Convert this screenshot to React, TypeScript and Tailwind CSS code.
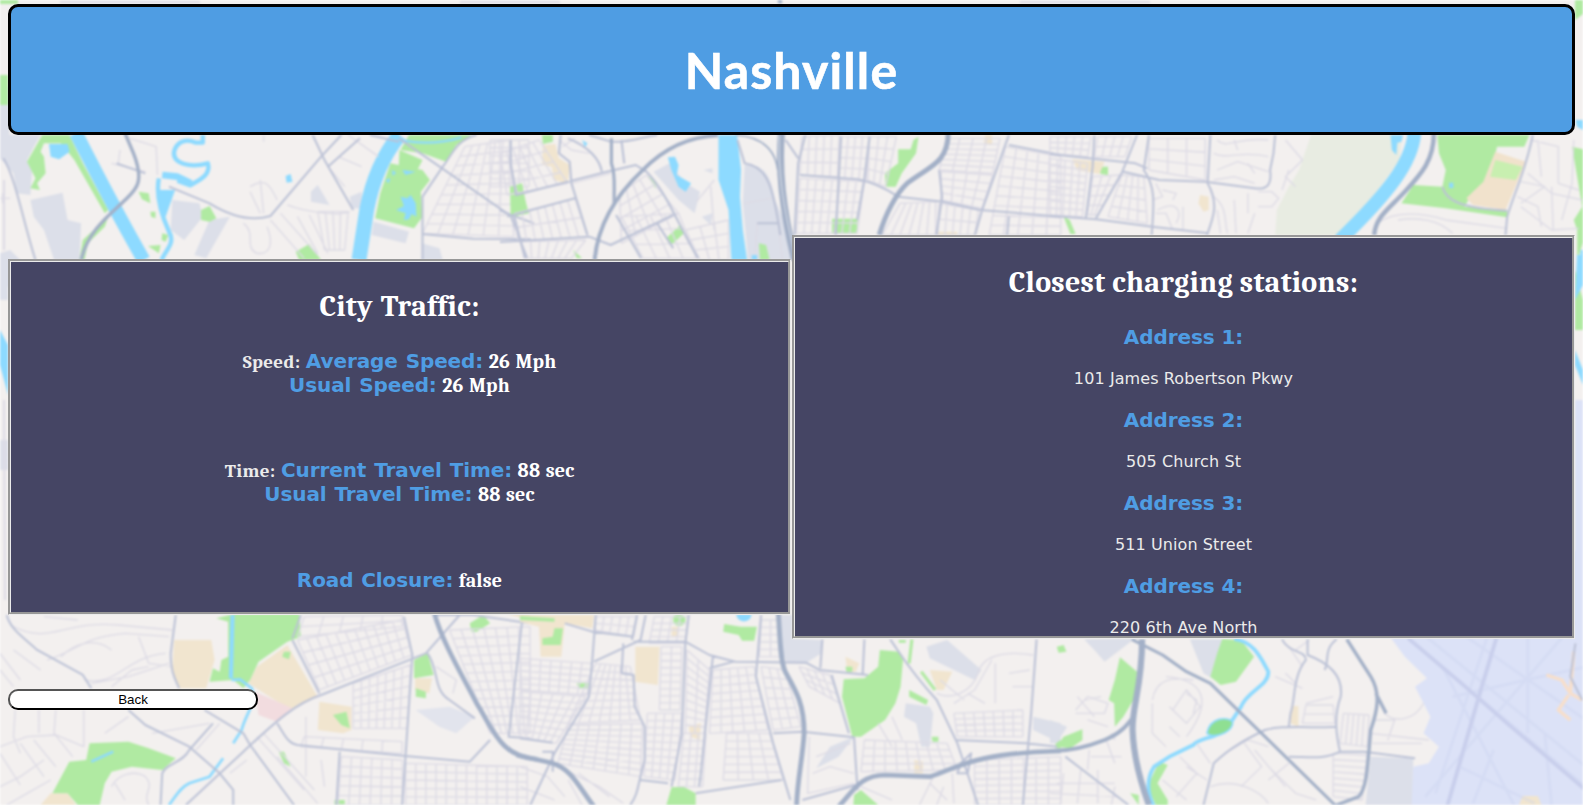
import React from "react";

type Pt = [number, number];

// Evenly spaced streets inside a quadrilateral (corners clockwise from top left).
function grid(a: Pt, b: Pt, c: Pt, d: Pt, cols: number, rows: number): string {
  const mix = (p: Pt, q: Pt, t: number) =>
    `${(p[0] + (q[0] - p[0]) * t).toFixed(1)} ${(p[1] + (q[1] - p[1]) * t).toFixed(1)}`;
  let out = "";
  for (let i = 0; i <= cols; i++) out += `M${mix(a, b, i / cols)}L${mix(d, c, i / cols)}`;
  for (let j = 0; j <= rows; j++) out += `M${mix(a, d, j / rows)}L${mix(b, c, j / rows)}`;
  return out;
}

const GREEN = "#b0eaa2";
const WATER = "#8ddaff";
const GRAY = "#dcdfe9";
const SAND = "#f1e5cf";

function Fill({ c, d }: { c: string; d: string }) {
  return <path d={d} fill={c} stroke="none" />;
}
function Minor({ d }: { d: string }) {
  return <path d={d} stroke="#dddbe5" strokeWidth="4" />;
}
function Street({ d }: { d: string }) {
  return <path d={d} stroke="#bcc2d6" strokeWidth="6" />;
}
function Highway({ d, w = 10 }: { d: string; w?: number }) {
  return <path d={d} stroke="#a3b0c7" strokeWidth={w} />;
}
function River({ d, w }: { d: string; w: number }) {
  return <path d={d} stroke={WATER} strokeWidth={w} />;
}

function NorthWest() {
  return (
    <g transform="translate(0 120) scale(.338 .3333)">
      <Fill c={GRAY} d="M0 -100H28V45H120L100 80L80 120L95 150L90 225L50 220L40 160L0 115Z M90 240L185 218L200 300L240 310L235 420H160L130 330L100 290Z M0 400L30 390L60 420V500H0Z M510 240L590 250L600 290L545 360L505 330Z M620 300L680 290L610 415L575 405Z M920 215L940 195L975 255L920 245Z M1035 230L1070 215V265H1040Z M1105 305L1210 335L1200 370L1100 345Z M1248 370L1300 385L1310 420H1248Z" />
      <Fill c={GREEN} d="M125 45H205L245 130L320 270L310 280L220 120L180 70L130 70L120 95L130 110L135 160L110 190L118 210L90 205L105 175L80 125Z M235 420L245 360L320 290L310 320L260 370L250 420Z M875 395L915 372L950 420H885Z M595 270L620 258L640 295L620 305L595 300Z M410 215L440 220L445 250L420 238Z M445 275L460 275V295L447 290Z M480 340L498 345L490 365L478 360Z M438 378L475 375L470 400Z M1210 45H1395L1350 75L1320 125L1250 100L1185 90Z M1182 90L1250 120L1235 150L1180 135Z M1155 130L1250 150L1272 180L1245 215L1250 290L1225 325L1110 295L1125 220Z M1510 200L1540 195L1565 280L1515 290Z" />
      <Fill c={WATER} d="M145 72H200L206 95L175 118L150 110Z M845 168L860 162L865 185L848 188Z M1190 150L1230 155L1200 165Z M1185 230L1205 235L1215 225L1230 250L1232 290L1218 282L1210 298L1195 300L1200 280L1172 270L1195 258Z M1140 180L1155 175L1150 190Z M1160 150L1172 158L1162 168Z M470 210H518L490 290L472 260Z" />
      <path d="M1195 62Q1280 78 1365 52" stroke={WATER} strokeWidth="7" />
      <River w={40} d="M225 40C270 130 340 270 425 420" />
      <River w={13} d="M600 45V68H580C540 50 520 75 515 95C510 130 560 145 615 130C625 165 590 180 562 196L525 182" />
      <River w={20} d="M565 190L525 170L480 165" />
      <River w={13} d="M470 175C460 230 480 290 500 335C520 370 490 390 478 420" />
      <River w={44} d="M1182 45C1130 110 1100 190 1085 270L1062 420" />
      <Minor d={"M385 55L462 80L466 165M350 130L355 90M330 130L430 155M740 200C790 170 800 200 820 240M770 180L780 280M740 215L770 280M720 310C760 340 720 380 760 400C800 405 810 370 790 320M800 300L900 415M830 280L940 405M850 255C900 275 1000 290 1035 275M880 290L940 400M915 285L970 400M0 235H30M8 220V250M970 140L1020 200M1000 110L1070 140M780 45V65M1030 45L1120 110" + grid([1375, 80], [1510, 60], [1520, 350], [1250, 340], 6, 9) + grid([940, 275], [1030, 275], [1020, 390], [960, 390], 4, 1) + grid([1450, 60], [1565, 60], [1565, 200], [1450, 200], 4, 6)} />
      <Street d="M10 115C45 170 70 310 105 420M500 200L620 250C700 300 760 300 800 288L950 110L1010 45M925 45L960 120L1045 270M970 140L1065 55M345 130L430 160M1095 45L1180 65M1250 420L1250 230L1310 140C1340 100 1350 60 1410 45M1180 55L1500 280L1580 310M1250 342L1400 356L1570 358M1510 285L1560 415" />
      <Highway d="M370 40L395 100C430 190 400 210 370 240C330 280 260 330 240 420" />
    </g>
  );
}

function NorthCenter() {
  return (
    <g transform="translate(500 120) scale(.3571 .3333)">
      <Fill c={GRAY} d="M430 155L475 130L520 190L560 215L545 280L500 240Z M685 135C740 130 760 170 770 240L815 345V420H695L680 250Z M565 290L595 280L590 315Z M570 150L595 145V160Z" />
      <Fill c={SAND} d="M120 75L155 72L165 115L195 135L190 190L150 180L145 140L118 135Z M1358 45H1378V75L1355 70Z M1222 335H1280V345H1222Z" />
      <Fill c={GREEN} d="M118 45H148V65L120 72Z M28 200L62 190L78 280L30 290Z M465 355L505 315L515 340L480 375Z M1115 88H1150L1158 60L1172 50L1165 100L1125 160L1108 200H1080L1078 160L1115 130Z M930 296H1002L998 342H930Z M725 370L745 375L755 420H728Z M412 165L440 190L435 205Z M205 390L230 415H215Z" />
      <Fill c={WATER} d="M612 45H664L675 150L672 230L680 330L692 420H648L640 270L612 180Z M470 112L490 110L500 135L495 165L535 190L520 215L500 200L480 150Z M705 405H720V420H705Z M230 60L245 70L238 82Z" />
      <Minor d={grid([0, 100], [110, 60], [190, 190], [20, 225], 6, 4) + grid([40, 280], [210, 235], [245, 350], [50, 365], 8, 2) + grid([60, 365], [240, 360], [200, 415], [70, 415], 7, 1) + grid([335, 220], [410, 165], [500, 280], [340, 370], 4, 4) + grid([340, 290], [500, 280], [550, 415], [400, 415], 4, 3) + grid([520, 330], [640, 300], [640, 420], [560, 420], 3, 3) + grid([845, 50], [950, 45], [945, 170], [840, 165], 5, 3) + grid([955, 50], [1035, 50], [1025, 180], [945, 175], 4, 4) + grid([840, 175], [1020, 185], [1000, 340], [830, 340], 8, 5) + grid([1035, 50], [1110, 50], [1080, 200], [1030, 180], 3, 4) + grid([1250, 55], [1400, 55], [1380, 160], [1230, 150], 4, 6) + grid([1235, 155], [1380, 165], [1350, 265], [1235, 240], 4, 4) + grid([1120, 250], [1220, 245], [1220, 345], [1070, 345], 6, 1) + grid([1230, 250], [1340, 270], [1330, 345], [1225, 345], 5, 2) + grid([1415, 80], [1570, 110], [1570, 345], [1370, 345], 5, 9) + "M200 190L310 160M550 245L600 180M165 60L200 90L250 100M175 80L210 55M590 200L600 330M720 310L715 400M780 310L790 415M685 250L760 235"} />
      <Street d="M30 60V130L45 225L300 155L380 135L410 155C470 220 500 320 555 415M20 290L210 235M0 270L40 290L70 415M170 45L165 100L195 125L200 190L245 345M0 366L250 350L310 375L485 285M325 285L395 415M250 45L310 65C360 70 400 50 440 45M340 60L348 130M190 55C250 80 280 120 285 155M440 310L485 385M840 165L1000 178C1060 190 1100 220 1115 230L1240 245L1345 270L1570 290M855 45L835 130L825 345M955 50L940 345M1035 50L1020 180L1000 300M1425 45L1350 270L1330 345M1230 150L1238 230L1222 345M1425 75L1570 105M1425 290L1420 345M720 310H783M665 60L685 130C750 140 765 200 785 345M800 60L835 115" />
      <Highway w={9} d="M312 55V130C325 170 318 200 320 250" />
      <Highway w={11} d="M265 420C275 300 340 210 400 150C450 95 520 50 610 46" />
      <Highway w={5} d="M660 45C730 50 770 85 778 150" />
      <Highway w={20} d="M778 -360H790M788 40C780 150 790 260 825 420" />
      <path d="M782 45C778 160 795 270 825 400" stroke="#dbe1ea" strokeWidth="3" />
      <Highway w={14} d="M1255 40C1255 130 1200 140 1140 190C1110 220 1080 280 1062 345" />
    </g>
  );
}

function NorthEast() {
  return (
    <g transform="translate(1050 120) scale(.3412 .3333)">
      <Fill c="#e8ece2" d="M765 45H1030L1025 120L940 240L840 345H660L665 270L700 200L730 150Z" />
      <Fill c={GREEN} d="M1135 45H1405L1390 80H1310L1290 180L1240 215L1215 260L1340 270V292L1160 265L1030 250L1065 195L1150 200L1160 150L1140 100Z M40 290L58 300L75 342H60Z M1530 80L1570 90V345L1545 420V330L1535 300L1560 260Z M145 140H170V165L148 162Z" />
      <Fill c={SAND} d="M65 118L160 125L145 162L80 150Z M440 225L465 230V270L450 275L435 250Z" />
      <Fill c="#f1e2cc" d="M1305 95L1395 125L1335 270L1240 255L1220 235L1270 185Z" />
      <Fill c="#c8efb0" d="M1305 120L1385 140L1365 180L1290 170Z" />
      <Fill c={WATER} d="M998 45H1035L1030 65L1018 68L1015 105L1002 90Z M1540 0H1570V35L1545 20Z M1555 390H1570V420H1553Z M1170 188H1182V204H1170Z" />
      <River w={40} d="M1068 40C1060 130 990 220 850 360" />
      <Minor d={grid([0, 50], [120, 50], [110, 110], [0, 100], 5, 3) + grid([140, 50], [240, 50], [220, 110], [130, 110], 4, 2) + grid([0, 115], [110, 130], [95, 290], [0, 285], 5, 8) + grid([125, 170], [205, 165], [140, 285], [110, 285], 3, 4) + grid([210, 165], [275, 170], [285, 310], [170, 290], 4, 4) + grid([290, 55], [455, 55], [455, 180], [290, 150], 3, 3) + "M310 190L330 230L300 240M330 210L370 220L360 240M315 270C370 240 390 270 370 310M310 280H340L360 330M390 260V330M490 60C520 90 540 50 640 60M480 100C520 120 560 90 640 110M490 150L550 125L640 155M540 60L550 90M580 130L600 160M480 180L540 170L600 190M480 230C520 260 510 300 520 340M540 240L545 340M490 270L500 340M610 215H650L670 235L650 260H610M600 280L580 340M580 220V280M690 60L740 120L690 170L720 200M700 150L680 210M960 310C1010 270 1100 280 1160 300L1340 325M1020 300C1080 290 1140 300 1180 340M1400 160L1470 220L1560 240M1370 230L1430 260L1440 320M1410 60L1490 80V190L1550 210M1380 260L1470 330L1550 325M1470 200L1475 330M1430 60L1440 170M1500 300L1530 190L1535 60M1380 185L1450 200L1380 250"} />
      <Street d="M0 102L250 130L285 145M130 45L125 140L105 295M255 45L210 160L135 295M215 155L320 180L455 185L600 205C640 210 650 190 645 150L655 100L660 45M0 287L135 298L300 320L465 340M290 45L275 150C310 200 305 250 298 345M470 45L462 190C495 250 480 290 460 345M1415 45C1395 150 1360 220 1340 290L1335 345M1150 200C1160 240 1200 265 1340 272" />
      <Highway w={13} d="M1125 40C1125 120 1090 160 1040 215C990 270 955 290 950 345" />
    </g>
  );
}

function SouthWest() {
  return (
    <g transform="translate(0 600) scale(.338 .3333)">
      <Fill c={SAND} d="M515 120H625L635 180L610 265H530L510 210Z M850 135L940 290L860 330L735 250L760 200Z M945 305L1040 320V390L1015 400L940 390Z M1228 235H1278L1270 280L1228 270Z M120 615L150 580H200L225 615Z M1500 42H1568V60Z" />
      <Fill c="#f2dcdf" d="M755 275L865 325L820 365L765 345Z" />
      <Fill c={GREEN} d="M640 55L690 42H885L890 110L850 125L765 185L740 240L720 265L690 240L620 245L630 205L650 215L655 180L675 170V65Z M265 430L380 425L440 445L520 475L480 510L390 500L330 515L310 550L295 615H230L200 580H155L205 485L255 480Z M1225 180L1265 160L1283 225L1225 235Z M1390 70L1430 45L1450 70L1410 95H1395Z M825 455L840 455L860 500L840 490Z M985 345L1025 335L1035 385L1010 375Z M1230 265L1260 275V295L1230 290Z M840 155H860L855 178L835 170Z M990 600H1020V620H990Z" />
      <Fill c="#e2e4ed" d="M1230 330L1330 320L1405 350L1350 400L1300 380Z" />
      <River w={12} d="M688 45L683 235" />
      <River w={8} d="M685 240L710 238L745 265C760 310 725 345 715 390L690 430M660 475L620 530L560 550C530 565 520 590 500 615M270 485L335 455" />
      <Minor d={"M30 75C150 140 180 60 350 75L510 90M140 180C230 150 250 110 370 100L500 110M180 170C220 130 280 110 330 150M250 240C350 260 370 170 490 160M270 250L380 230L500 190M330 260L390 210L440 200M0 160L60 240M40 150L120 210M0 210L40 260M130 50L230 60M45 330L40 410L60 460M115 330V400M165 330L160 400L215 470M248 330V440M0 440L80 410L165 405L248 440M0 460L60 555M60 430L130 530M100 420L165 500M0 560L60 530L130 480M20 615L80 580L150 540M410 110L440 190L510 200M330 560C350 520 400 510 430 530C460 560 420 580 440 615M340 550L370 600M310 400L380 350M450 400L620 370M580 450L650 370" + grid([880, 120], [1190, 60], [1220, 165], [945, 270], 11, 4) + grid([900, 50], [1190, 45], [1190, 80], [880, 110], 5, 2) + grid([1045, 250], [1215, 195], [1205, 385], [1045, 385], 7, 6) + grid([900, 410], [1190, 425], [1190, 460], [890, 440], 5, 1) + grid([1010, 470], [1190, 480], [1190, 615], [1000, 615], 6, 5) + grid([1200, 490], [1560, 500], [1560, 615], [1200, 615], 12, 5) + grid([1330, 90], [1568, 80], [1568, 400], [1450, 400], 7, 12) + "M760 410L900 570M780 400L930 570M820 470L940 610M730 480L680 520M950 480L960 560M905 350V530M1290 200L1350 240L1340 280"} />
      <Street d="M20 45C30 90 80 120 110 150L245 225L270 265M380 330L430 375L560 440L650 520L690 570V615M605 330L720 400L740 435L870 615M520 45L505 160C505 220 520 240 530 265M865 120L945 280M550 615L720 455C800 380 870 310 950 285L1260 160L1360 45M820 370C840 400 850 430 880 435L1200 468L1390 485L1450 420M475 615L480 520C490 490 540 490 560 450L630 370M1195 50L1220 165L1190 615M1265 160C1300 210 1280 270 1330 300L1405 355M1545 60L1505 410L1568 415M1005 455L995 615M865 115L890 45M1290 45H1400L1568 70" />
      <Highway w={14} d="M1285 40C1310 130 1370 230 1410 310C1460 390 1480 470 1590 478" />
    </g>
  );
}

function SouthCenter() {
  return (
    <g transform="translate(520 600) scale(.3444 .3333)">
      <Fill c={GRAY} d="M755 45H790V115L875 120V160L830 190H775L760 150Z M1120 310L1190 320L1200 340L1190 440H1165L1150 370L1115 350Z M970 410L925 470L860 505L900 440Z M1240 120L1340 210L1320 240L1190 175L1180 140Z M1490 350L1570 370V430L1490 390Z" />
      <Fill c={SAND} d="M0 45H215L210 85L130 70L120 170H60L55 80L0 65Z M335 140H405L400 255L335 245Z M490 380L525 370L522 420L495 410Z M945 170L985 190L975 215H950Z M1190 210L1255 215L1230 270H1210Z M1145 480L1170 485V520H1145Z M440 80H460V110H440Z" />
      <Fill c={GREEN} d="M65 115L95 110L100 85H125L118 135H65Z M445 50C450 40 475 40 480 55C485 80 450 85 445 65Z M593 72L640 80H688L680 122H645L635 105L590 95Z M165 250H200V265H170Z M1045 150L1100 155L1112 180L1105 260L1090 310L1060 360L990 410H965L950 350L935 290L940 238L1000 235L1040 200Z M440 562L475 560L510 580V615H425Z M1130 270L1185 300L1180 315L1130 290Z M1100 120H1120V128H1100Z M970 585L990 570L1040 615H968Z M945 200H965V215H948Z M1195 410H1215V425H1198Z M1555 430L1570 420V445H1555Z M0 48L100 55V65L0 60Z" />
      <Fill c={WATER} d="M628 43H672C672 70 630 72 628 43Z" />
      <path d="M1138 118L1130 190M1165 215L1205 270" stroke={GREEN} strokeWidth="9" />
      <Minor d={grid([0, 175], [210, 190], [195, 285], [0, 270], 7, 5) + grid([0, 275], [190, 290], [105, 430], [0, 410], 6, 7) + grid([220, 190], [320, 200], [350, 360], [140, 370], 7, 8) + grid([140, 375], [355, 370], [350, 530], [110, 490], 7, 8) + grid([220, 50], [340, 50], [330, 110], [215, 90], 5, 2) + grid([390, 50], [490, 50], [480, 130], [375, 130], 4, 4) + grid([410, 140], [470, 140], [465, 330], [405, 330], 2, 9) + grid([370, 340], [470, 340], [450, 540], [360, 530], 4, 9) + grid([485, 150], [550, 210], [535, 400], [480, 400], 2, 10) + grid([475, 400], [540, 400], [530, 560], [460, 560], 3, 7) + grid([560, 210], [680, 200], [720, 390], [550, 400], 5, 8) + grid([600, 400], [725, 400], [765, 540], [590, 540], 4, 6) + grid([700, 60], [755, 60], [760, 170], [695, 170], 2, 5) + grid([700, 200], [770, 210], [815, 380], [735, 390], 3, 6) + grid([810, 200], [900, 225], [930, 310], [840, 260], 4, 3) + grid([1000, 420], [1240, 430], [1270, 510], [990, 515], 8, 4) + grid([1320, 480], [1570, 470], [1570, 615], [1320, 615], 7, 7) + grid([1260, 340], [1460, 330], [1460, 410], [1270, 410], 7, 4) + "M110 500L230 560L300 610M0 500L80 530L130 590M0 560L100 600M140 540L180 615M170 520L260 590M840 410L835 580L970 550M860 470L960 430M850 520L900 500L970 520M1210 280C1250 300 1310 280 1330 220C1340 170 1400 150 1490 165M1260 310L1320 270L1370 180M1300 280L1350 310M1380 190V310M1430 260H1490M1420 220L1480 210M1220 240L1290 300M990 560L1080 600M1190 550L1240 600M1200 530L1160 615M1230 560L1210 615M1255 520L1260 610M1080 350L1110 420M1040 370L1080 440"} />
      <Street d="M220 45L210 180L200 290L100 460L30 615M340 45L325 120M365 45L350 120L215 185M300 130L295 220L330 225L333 320L362 380V480C340 560 345 580 320 615M330 125H480L550 165L625 185L830 188L870 210L1010 225M490 45L480 130L470 400L440 560M700 45L685 230L735 430L785 600M560 170L525 520L520 560M550 205L620 185M0 415L95 428M350 540L430 550M510 580L760 540M735 400L820 395L970 412L980 570M878 118L872 205M1000 118L995 225M905 225L955 400M820 600L975 555M1075 118C1110 170 1130 210 1210 300L1270 430L1330 615M1500 118L1485 330L1460 615M1265 420L1470 430L1560 440M130 70L210 95L330 110M1280 490L1310 460L1300 520H1270ZM65 455H95V515" />
      <Highway w={14} d="M-10 465L90 488C150 505 170 560 215 620" />
      <Highway w={14} d="M750 40C755 110 755 180 770 215C800 270 825 310 825 400C820 480 805 540 803 620M925 620C970 570 990 525 1060 525L1190 530C1260 510 1300 460 1570 453" />
    </g>
  );
}

function SouthEast() {
  return (
    <g transform="translate(1050 600) scale(.3412 .3333)">
      <Fill c="#dce2f7" d="M1000 115L1540 -150H1570V615H1440C1420 580 1390 590 1375 615H1055L1065 500L1110 490L1140 440L1095 400L1115 350L1070 260L1105 235L1040 170Z" />
      <Fill c={GRAY} d="M100 118L250 115L160 185L130 150Z M410 118H510L475 235L450 220Z M940 470L1065 475L1060 615H925Z M0 360L50 380L20 430H0Z" />
      <Fill c={SAND} d="M708 318H728V380L705 370Z M1375 615L1385 588H1430L1440 615Z" />
      <Fill c={GREEN} d="M205 172L255 215L250 290L215 350L190 380L188 310L172 300L190 240Z M505 117L560 120L598 170L545 245L500 255L470 230L490 160Z M20 440L40 410L95 388V420L60 445Z M320 485L345 495L315 550L345 600V615H310L285 560Z M235 580L260 585V615Z M20 140L40 135L48 155L25 158Z" />
      <River w={11} d="M540 117C600 125 620 180 640 215C640 260 580 270 560 320L525 375C490 420 440 410 420 435L350 470L305 500C280 540 285 580 305 620" />
      <path d="M460 400C470 350 520 350 535 365C540 390 490 420 460 400Z" fill="#8fdf92" stroke={WATER} strokeWidth="5" />
      <path d="M1100 590L1570 30M1050 115L1570 560M1090 100L1570 500M1150 60L1570 360M1310 115L1170 610M1280 115L1130 580M1240 610L1300 450M1180 290L1570 200M1200 500L1420 610M1150 200L1360 615M1400 100L1400 400M1450 400L1470 615" stroke="#c9d1ee" strokeWidth="8" opacity=".35" />
      <path d="M1050 115L1200 245L1340 370L1570 570M1308 115L1265 260L1165 615" stroke="#c9cfec" strokeWidth="11" />
      <path d="M1535 155L1525 280L1560 300M1520 285L1490 330L1525 360M1455 225L1500 240L1525 280" stroke="#f8dfca" strokeWidth="10" />
      <Minor d={"M80 290L130 350M75 330L110 290L170 310L160 340H75M100 300L150 290M110 360L170 380M340 230C450 240 480 300 400 410M300 300C310 240 350 230 420 240M360 330L400 270L440 320L400 370L350 320M300 310V400L340 440M400 280L430 300L420 340M350 380L380 410M720 250L690 220M760 120L720 150M740 200L700 140M660 230L740 265M750 310L830 290M330 540L400 600M380 470L430 520L370 590M430 430L470 490M400 500L460 540M570 430L620 500L560 560M600 450L690 560M530 450L580 420L640 440M470 560C550 530 620 580 640 610M700 490L640 540M640 500L720 580L780 600M20 550H190M0 580L200 590M40 520L30 615M90 510L80 610M140 510V610M190 560L180 615M115 450L110 510M165 420L190 490M120 470H210M180 400L190 420" + grid([750, 315], [830, 315], [835, 370], [740, 370], 1, 2) + grid([860, 340], [935, 345], [930, 440], [850, 430], 5, 1) + grid([830, 460], [930, 465], [915, 600], [830, 590], 1, 7) + "M980 340C1010 370 1070 360 1095 310M950 360L1010 360L990 420M940 400L1110 420M945 430H1090"} />
      <Street d="M45 470L230 615M450 615L480 490C530 440 580 415 630 390C680 375 740 385 840 380M680 118C700 160 750 150 750 180C710 230 720 300 705 340L700 380M755 118V165C820 190 860 230 852 290C830 350 840 410 850 455L920 455L1070 475M850 455C800 480 760 470 700 470M840 118C800 150 820 180 805 210M1540 130L1525 230L1560 300" />
      <Highway w={9} d="M240 118L330 165L400 215L470 250L560 340L840 620" />
      <Highway w={10} d="M870 118L940 230C970 280 960 330 940 390C930 500 930 560 905 590L840 615M955 280L985 340" />
      <Highway w={18} d="M270 118C270 260 240 320 242 390C245 470 270 560 290 615" />
      <Highway w={12} d="M0 453C60 455 110 440 160 420C210 400 230 370 245 350" />
    </g>
  );
}

function Edges() {
  return (
    <g>
      <path d="M0 75H8V105H0Z" fill={GREEN} />
      <path d="M0 330L8 345V395L0 365Z" fill={WATER} />
      <path d="M0 440H8V470H0ZM0 265H8V300H0Z" fill={GRAY} />
      <path d="M1575 0H1583V14L1575 20ZM1575 270L1583 300V330H1575Z" fill={GREEN} />
      <path d="M1577 255H1583V285L1575 300ZM1575 350L1583 370V385L1575 365Z" fill={WATER} />
      <path d="M1575 400H1583V640H1575Z" fill="#dce2f7" />
      <path d="M0 0H18V4H0Z" fill={GREEN} />
      <path d="M60 2H200M460 2H560M1020 2H1150M4 180V250M4 400L5 600" stroke="#dcdae5" strokeWidth="2" />
    </g>
  );
}

function CityMap() {
  return (
    <svg
      className="absolute inset-0 -z-10 h-[805px] w-[1583px] bg-[#f3f0ef] blur-[0.9px]"
      viewBox="0 0 1583 805"
      fill="none"
      strokeLinejoin="round"
      aria-hidden="true"
    >
      <NorthWest />
      <NorthCenter />
      <NorthEast />
      <SouthWest />
      <SouthCenter />
      <SouthEast />
      <Edges />
    </svg>
  );
}

const stations = ["101 James Robertson Pkwy", "505 Church St", "511 Union Street", "220 6th Ave North"];

function Title({ children }: { children: React.ReactNode }) {
  return (
    <h2 className="font-['Cambria','DejaVu_Serif',serif] text-[30px] leading-[35px] font-bold tracking-[0.27px] text-white">
      {children}
    </h2>
  );
}

function Label({ children }: { children: React.ReactNode }) {
  return (
    <span className="font-['Verdana','DejaVu_Sans',sans-serif] text-[20px] font-bold tracking-[-0.1px] text-[#4f9de3]">
      {children}
    </span>
  );
}

function Value({ children }: { children: React.ReactNode }) {
  return <span className="text-[20px] font-bold tracking-[0.15px] text-white">{children}</span>;
}

export default function App() {
  return (
    <div className="relative isolate h-[805px] w-[1583px] overflow-hidden px-2 pt-1">
      <CityMap />
      <header className="flex h-[131px] items-center justify-center rounded-[10px] border-[3px] border-black bg-[#4f9de3]">
        <h1 className="font-['Trebuchet_MS','Lato',sans-serif] text-[50px] leading-none font-bold tracking-[1.1px] text-white [-webkit-text-stroke:0.6px_white]">
          Nashville
        </h1>
      </header>

      <main className="mt-[100px] flex h-[404px] items-center justify-between text-center">
        <section className="flex h-[356px] w-[783px] flex-col items-center border-[3px] [border-style:groove] border-[#ebebeb] bg-[#454564] pt-[27px] font-['Cambria','DejaVu_Serif',serif] text-[19px] leading-6 font-bold tracking-[0.35px] text-[#ebebeb] [word-spacing:1px]">
          <Title>City Traffic:</Title>
          <div className="mt-[25px]">
            <p className="h-6">Speed: <Label>Average Speed:</Label> <Value>26 Mph</Value></p>
            <p className="h-6"><Label>Usual Speed:</Label> <Value>26 Mph</Value></p>
          </div>
          <div className="mt-[61px]">
            <p className="h-6">Time: <Label>Current Travel Time:</Label> <Value>88 sec</Value></p>
            <p className="h-6"><Label>Usual Travel Time:</Label> <Value>88 sec</Value></p>
          </div>
          <p className="mt-[62px] h-6"><Label>Road Closure:</Label> <Value>false</Value></p>
        </section>

        <section className="flex h-[404px] w-[783px] flex-col items-center overflow-hidden border-[3px] [border-style:groove] border-[#ebebeb] bg-[#454564] pt-[27px]">
          <Title>Closest charging stations:</Title>
          <dl className="mt-[25px] font-['Verdana','DejaVu_Sans',sans-serif]">
            {stations.map((address, i) => (
              <div key={address} className="h-[83px]">
                <dt className="leading-6"><Label>Address {i + 1}:</Label></dt>
                <dd className="mt-4 text-[16px] leading-6 tracking-[0.1px] text-[#ebebeb]">{address}</dd>
              </div>
            ))}
          </dl>
        </section>
      </main>

      <button className="mt-[50px] block h-[21px] w-[250px] rounded-[10px] border-2 border-black [border-style:outset] bg-white font-['Arial','Liberation_Sans',sans-serif] text-[13.333px] leading-[17px] text-black">
        Back
      </button>
    </div>
  );
}
